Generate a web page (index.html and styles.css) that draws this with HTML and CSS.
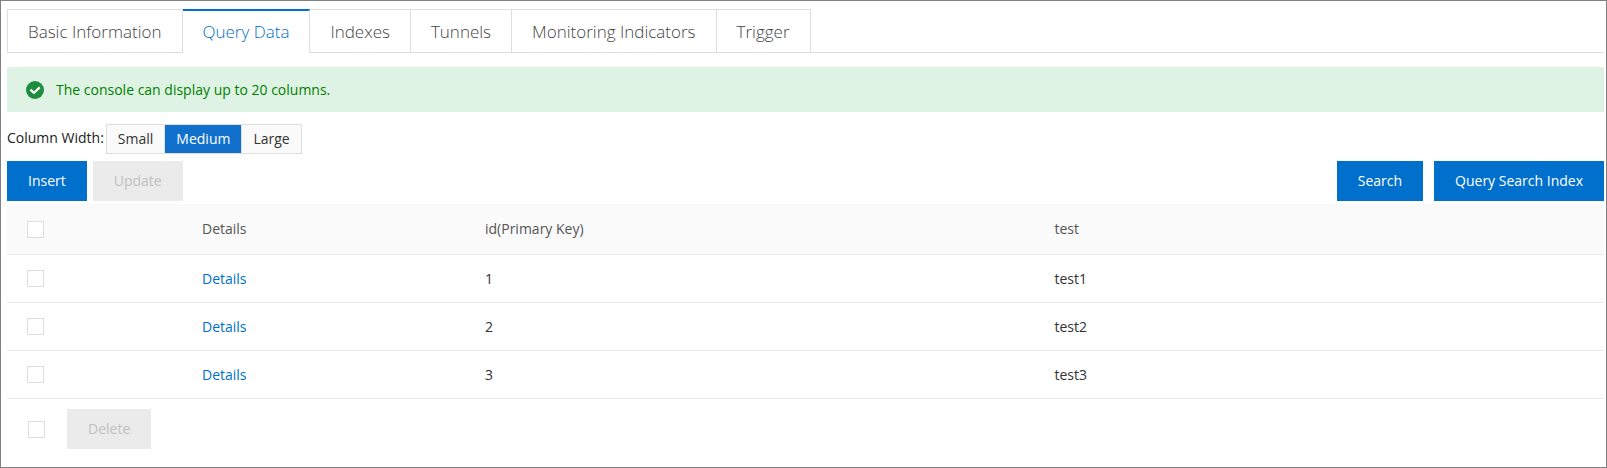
FILE: index.html
```html
<!DOCTYPE html>
<html lang="en">
<head>
    <meta charset="UTF-8">
    <meta name="viewport" content="width=device-width, initial-scale=1.0">
    <title>Query Data</title>
    <link rel="stylesheet" href="styles.css">
</head>
<body>
    <nav class="tabs">
        <a href="#basic" class="tab">Basic Information</a>
        <a href="#query" class="tab active">Query Data</a>
        <a href="#indexes" class="tab">Indexes</a>
        <a href="#tunnels" class="tab">Tunnels</a>
        <a href="#monitoring" class="tab">Monitoring Indicators</a>
        <a href="#trigger" class="tab">Trigger</a>
    </nav>

    <main>
        <div class="notice">
            <svg class="notice-icon" viewBox="0 0 18 18" aria-hidden="true">
                <circle cx="9" cy="9" r="9" fill="#1e8e3e"/>
                <path d="M4.4 8.6 L7.9 11.8 L13.8 6.4" fill="none" stroke="#fff" stroke-width="2.2"/>
            </svg>
            <p>The console can display up to 20 columns.</p>
        </div>

        <div class="width-row">
            <span class="width-label" id="width-label">Column Width:</span>
            <div class="width-group" role="group" aria-labelledby="width-label">
                <button type="button" class="width-btn">Small</button>
                <button type="button" class="width-btn active">Medium</button>
                <button type="button" class="width-btn">Large</button>
            </div>
        </div>

        <div class="toolbar">
            <div class="toolbar-left">
                <button type="button" class="btn">Insert</button>
                <button type="button" class="btn" disabled>Update</button>
            </div>
            <div class="toolbar-right">
                <button type="button" class="btn">Search</button>
                <button type="button" class="btn">Query Search Index</button>
            </div>
        </div>

        <table class="data-table">
            <colgroup>
                <col class="col-check">
                <col class="col-details">
                <col>
                <col>
            </colgroup>
            <thead>
                <tr>
                    <th><input type="checkbox" class="check" aria-label="Select all"></th>
                    <th>Details</th>
                    <th>id(Primary Key)</th>
                    <th>test</th>
                </tr>
            </thead>
            <tbody>
                <tr>
                    <td><input type="checkbox" class="check" aria-label="Select row 1"></td>
                    <td><a href="#row-1">Details</a></td>
                    <td>1</td>
                    <td>test1</td>
                </tr>
                <tr>
                    <td><input type="checkbox" class="check" aria-label="Select row 2"></td>
                    <td><a href="#row-2">Details</a></td>
                    <td>2</td>
                    <td>test2</td>
                </tr>
                <tr>
                    <td><input type="checkbox" class="check" aria-label="Select row 3"></td>
                    <td><a href="#row-3">Details</a></td>
                    <td>3</td>
                    <td>test3</td>
                </tr>
            </tbody>
        </table>

        <div class="table-footer">
            <input type="checkbox" class="check" aria-label="Select all rows">
            <button type="button" class="btn" disabled>Delete</button>
        </div>
    </main>
</body>
</html>
```

FILE: styles.css
```css
* {
    margin: 0;
    padding: 0;
    box-sizing: border-box;
}

body {
    min-height: 100vh;
    padding: 8px 2px 18px 6px;
    border: 1px solid #808080;
    background: #fff;
    color: #333;
    font-family: 'Segoe UI', 'Open Sans', sans-serif;
    font-size: 14px;
    line-height: 20px;
}

a {
    color: #0070cc;
    text-decoration: none;
}

button {
    font: inherit;
    cursor: pointer;
}

/* tabs */
.tabs {
    display: flex;
    border-bottom: 1px solid #dedede;
}

.tab {
    height: 43px;
    padding: 0 20px;
    border-top: 1px solid #dedede;
    border-right: 1px solid #dedede;
    color: #444;
    font-size: 17px;
    font-weight: 350;
    line-height: 43px;
}

.tab:first-child {
    border-left: 1px solid #dedede;
}

.tab.active {
    margin-bottom: -1px;
    border-top: 2px solid #0070cc;
    background: #fff;
    color: #0070cc;
    height: 44px;
    line-height: 41px;
}

/* notice */
.notice {
    display: flex;
    align-items: center;
    gap: 12px;
    height: 45px;
    margin-top: 14px;
    padding: 0 19px;
    background: #dff3e4;
    color: #008000;
}

.notice-icon {
    width: 18px;
    height: 18px;
}

/* column width */
.width-row {
    display: flex;
    gap: 2px;
    margin-top: 12px;
}

.width-label {
    color: #222;
    line-height: 28px;
}

.width-group {
    display: flex;
    border: 1px solid #dedede;
}

.width-btn {
    height: 28px;
    padding: 0 11px;
    border: none;
    border-right: 1px solid #dedede;
    background: #fafafa;
    color: #333;
}

.width-btn:last-child {
    border-right: none;
}

.width-btn.active {
    background: #1070cc;
    color: #fff;
}

/* buttons */
.toolbar {
    display: flex;
    justify-content: space-between;
    margin: 7px 0 3px;
}

.toolbar-left {
    display: flex;
    gap: 6px;
}

.toolbar-right {
    display: flex;
    gap: 11px;
}

.btn {
    height: 40px;
    padding: 0 21px;
    border: none;
    background: #0070cc;
    color: #fff;
}

.btn:disabled {
    background: #ebebeb;
    color: #c1c1c1;
    cursor: not-allowed;
}

/* table */
.data-table {
    width: 100%;
    table-layout: fixed;
    border-collapse: separate;
    border-spacing: 0;
}

.col-check {
    width: 175px;
}

.col-details {
    width: 283px;
}

.data-table th,
.data-table td {
    height: 48px;
    padding: 0 20px;
    border-bottom: 1px solid #ebebeb;
    text-align: left;
    vertical-align: middle;
}

.data-table th {
    height: 51px;
    background: #fafafa;
    color: #555;
    font-weight: normal;
}

.check {
    display: block;
    width: 17px;
    height: 17px;
    appearance: none;
    border: 1px solid #dedede;
    background: #fff;
}

.check:checked {
    background: #0070cc;
}

.table-footer {
    display: flex;
    align-items: center;
    gap: 22px;
    margin-top: 10px;
    padding-left: 21px;
}
```
